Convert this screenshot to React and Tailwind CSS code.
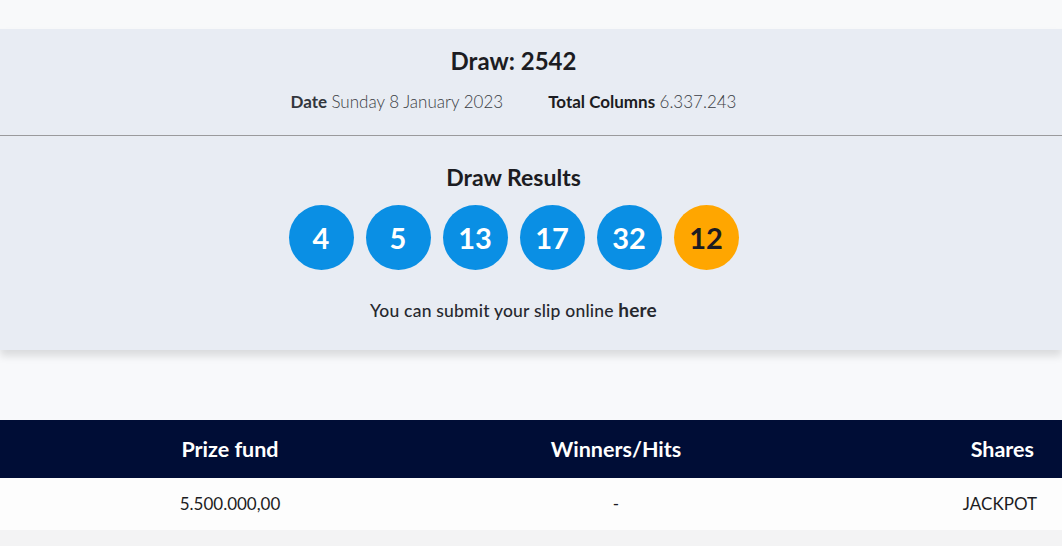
const balls = [
  { n: 4, bonus: false },
  { n: 5, bonus: false },
  { n: 13, bonus: false },
  { n: 17, bonus: false },
  { n: 32, bonus: false },
  { n: 12, bonus: true },
]

export default function App() {
  return (
    <div className="min-h-screen bg-[#f3f3f4] font-['Lato',sans-serif] text-[#1c1c22]">
      <div className="h-[29px] bg-[#f8f9fa]" />

      {/* Draw info */}
      <section className="bg-[#e8ecf3] shadow-[0_6px_8px_rgba(0,0,0,0.12)] relative">
        <div className="flex flex-col items-center pt-[15px] pb-[21px] pr-[35px]">
          <h1 className="text-[24px] font-bold leading-[34px]">Draw: 2542</h1>
          <div className="mt-[12px] flex gap-[45px] text-[17px] leading-[24px] text-[#3a3d44]">
            <span>
              <span className="font-bold text-[#33363d]">Date</span>{' '}
              <span className="font-light">Sunday 8 January 2023</span>
            </span>
            <span>
              <span className="font-bold text-[#1c1c22]">Total Columns</span>{' '}
              <span className="font-light">6.337.243</span>
            </span>
          </div>
        </div>
        <div className="h-px bg-[#9a9a9c]" />
        <div className="flex flex-col items-center pt-[27px] pb-[28px] pr-[35px]">
          <h2 className="text-[23px] font-bold leading-[28px]">Draw Results</h2>
          <div className="mt-[14px] flex gap-[12px]">
            {balls.map((b, i) => (
              <div
                key={i}
                className={
                  b.bonus
                    ? 'flex h-[65px] w-[65px] items-center justify-center rounded-full bg-[#ffa600] text-[29px] font-bold text-[#1c1c22]'
                    : 'flex h-[65px] w-[65px] items-center justify-center rounded-full bg-[#0a8fe4] text-[29px] font-bold text-white'
                }
              >
                {b.n}
              </div>
            ))}
          </div>
          <p className="mt-[29px] text-[17.5px] font-medium leading-[22px] tracking-[0.2px] text-[#26282e]">
            You can submit your slip online <span className="text-[19px] font-bold">here</span>
          </p>
        </div>
      </section>

      <div className="h-[70px] bg-[#f8f9fb]" />

      {/* Results table */}
      <div className="grid grid-cols-[460px_312px_1fr] bg-[#000d36] h-[58px] items-center text-[21.5px] font-bold text-white">
        <div className="text-center">Prize fund</div>
        <div className="text-center">Winners/Hits</div>
        <div className="text-right pr-[28px]">Shares</div>
      </div>
      <div className="grid grid-cols-[460px_312px_1fr] bg-[#fdfdfd] h-[52px] items-center text-[17px] text-[#1c1c22]">
        <div className="text-center">5.500.000,00</div>
        <div className="text-center">-</div>
        <div className="text-right pr-[25px]">JACKPOT</div>
      </div>
    </div>
  )
}
